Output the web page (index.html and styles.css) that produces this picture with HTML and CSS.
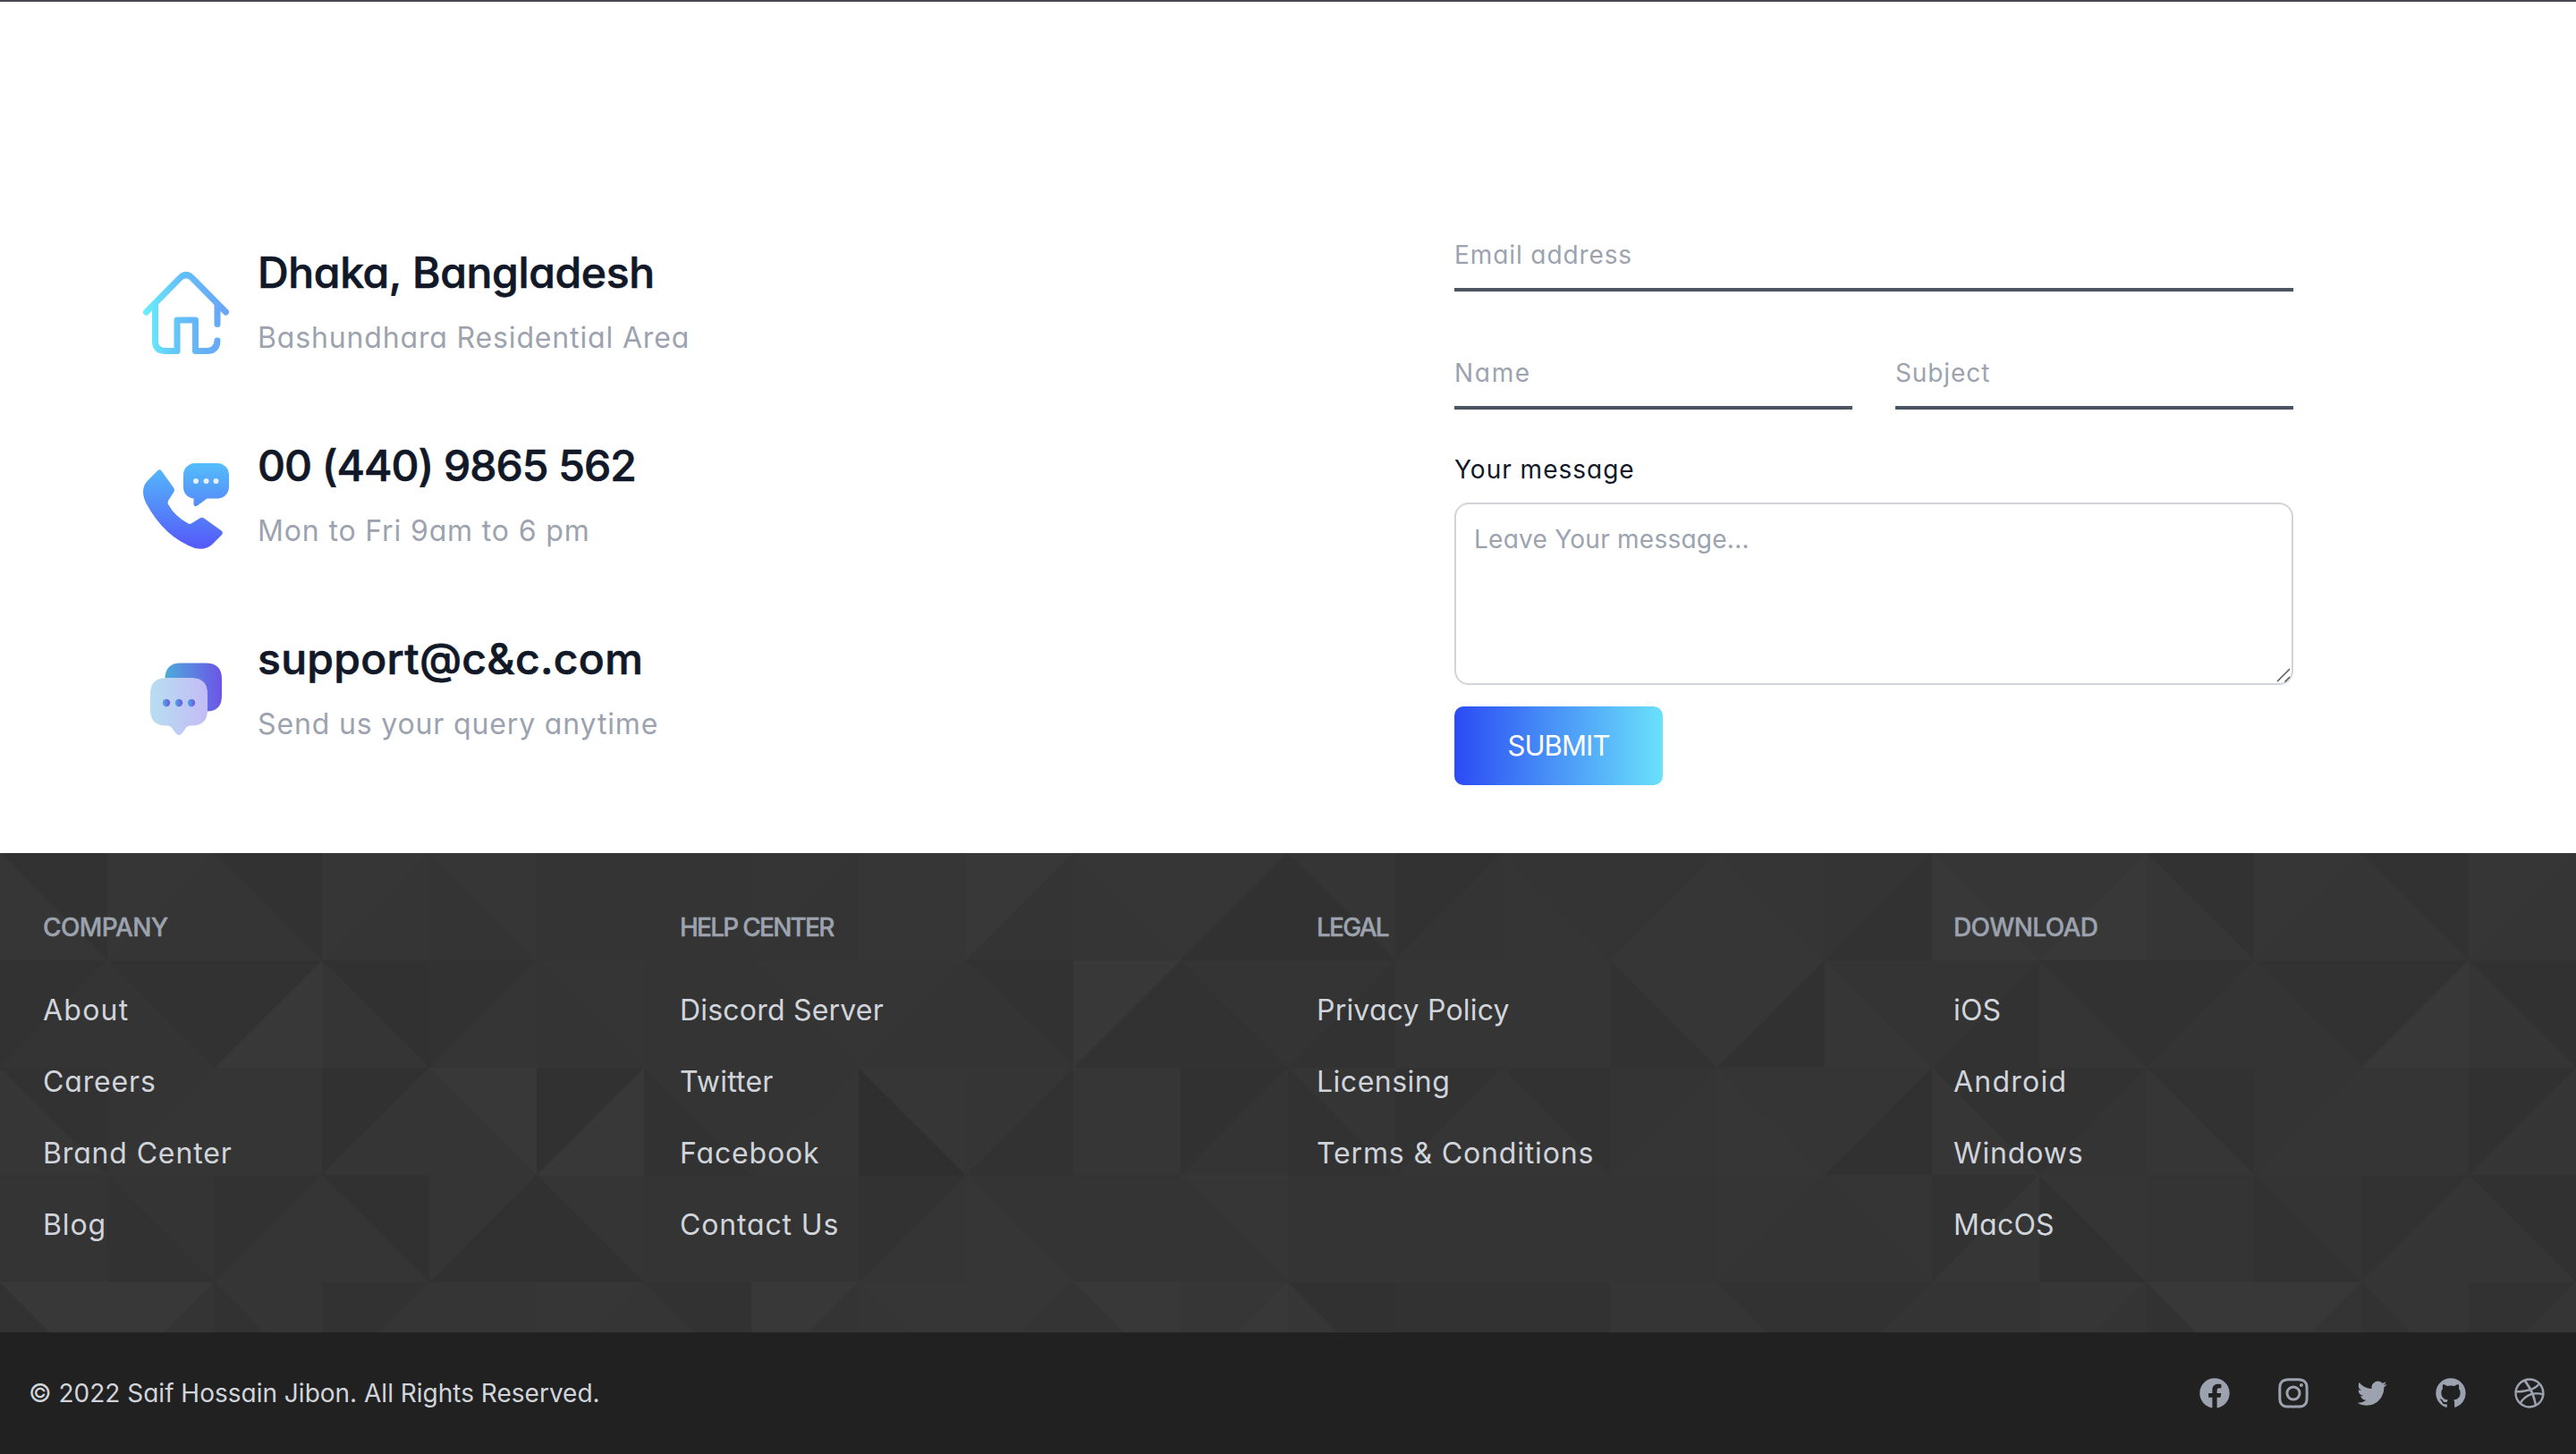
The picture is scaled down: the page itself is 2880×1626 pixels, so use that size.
FILE: index.html
```html
<!DOCTYPE html>
<html lang="en">
<head>
<meta charset="utf-8">
<title>Contact</title>
<link rel="stylesheet" href="styles.css">
</head>
<body>
<main class="contact">
  <section class="details">
    <div class="item">
      <svg class="item-icon" viewBox="0 0 96 96" fill="none" stroke="url(#gHouse)" stroke-width="7" stroke-linecap="round" stroke-linejoin="round">
        <defs><linearGradient id="gHouse" gradientUnits="userSpaceOnUse" x1="0" y1="48" x2="96" y2="48"><stop offset="0" stop-color="#6af0fc"/><stop offset=".45" stop-color="#63bff9"/><stop offset="1" stop-color="#69a3f9"/></linearGradient></defs>
        <path d="M3.5 47 41.500 8.500Q48 2.500 54.500 8.500L92.500 47"/>
        <path d="M13.500 38.500V79Q13.500 90.500 25 90.500H38V56H58.500V90.500H71Q82.500 90.500 83 79"/>
        <path d="M83 38.500V60.500"/>
      </svg>
      <div class="item-text"><h2>Dhaka, Bangladesh</h2><p>Bashundhara Residential Area</p></div>
    </div>
    <div class="item">
      <svg class="item-icon" viewBox="0 0 96 96">
        <defs><linearGradient id="gPhone" gradientUnits="userSpaceOnUse" x1="0" y1="0" x2="0" y2="96"><stop offset="0" stop-color="#54bdfb"/><stop offset="1" stop-color="#5558f9"/></linearGradient></defs>
        <g fill="url(#gPhone)">
        <path d="M58 0H83A13 13 0 0 1 96 13V26.500A13 13 0 0 1 83 39.500H71.500L60.500 47.500Q56.500 49.500 56.500 45V39.500A12.500 12.500 0 0 1 45 27V13A13 13 0 0 1 58 0Z"/>
        <path d="M16 8.500Q18.500 6 20.500 8.500L34.500 28Q35.500 30 34.500 32L28 42Q27 44 28 46Q36 60 50.500 67.500Q52.500 68.500 54.500 67L63.500 61.500Q66 60 68 61.500L87.500 75.500Q90 77.500 88 80L77 91Q70 97.500 58 95Q24 83 3.500 45Q-4 30 4.500 20Z"/>
        </g>
        <g fill="#e4f1fe"><circle cx="59" cy="20" r="3"/><circle cx="70.500" cy="20" r="3"/><circle cx="81.500" cy="20" r="3"/></g>
      </svg>
      <div class="item-text"><h2 class="figures">00 (440) 9865 562</h2><p>Mon to Fri 9am to 6 pm</p></div>
    </div>
    <div class="item">
      <svg class="item-icon" viewBox="0 0 96 96">
        <defs>
          <linearGradient id="gBack" x1="0" x2="1" y1="0" y2="0"><stop offset="0" stop-color="#4cabdb"/><stop offset="1" stop-color="#6c55e6"/></linearGradient>
          <linearGradient id="gFront" x1="0" x2="1" y1="0" y2="0"><stop offset="0" stop-color="#b8def1"/><stop offset="1" stop-color="#c3bbf5"/></linearGradient>
        </defs>
        <path fill="url(#gBack)" d="M24.500 30V25Q24.500 7.500 42 7.500H70Q88 7.500 88 25V44Q88 61.500 71 61.500L60 40Z"/>
        <path fill="url(#gFront)" d="M26 24H54Q72 24 72 42V60Q72 77.500 54 77.500H52Q49.500 77.500 48 80L43.500 86Q40 90 36.500 86L32 80Q30.500 77.500 28 77.500H26Q8 77.500 8 60V42Q8 24 26 24Z"/>
        <g fill="url(#gBack)"><circle cx="26" cy="52" r="4.200"/><circle cx="40" cy="52" r="4.200"/><circle cx="54" cy="52" r="4.200"/></g>
      </svg>
      <div class="item-text"><h2 class="mail">support@c&amp;c.com</h2><p>Send us your query anytime</p></div>
    </div>
  </section>
  <form class="form">
    <input class="field" type="text" placeholder="Email address">
    <div class="pair">
      <input class="field name" type="text" placeholder="Name">
      <input class="field" type="text" placeholder="Subject">
    </div>
    <label class="label" for="message">Your message</label>
    <div class="area">
      <textarea class="message" id="message" placeholder="Leave Your message..."></textarea>
      <svg class="grip" viewBox="0 0 16 16" stroke="#555" stroke-width="1.500"><path d="M1 15 15 1M9.500 15.500 15 10"/></svg>
    </div>
    <button class="submit" type="button">SUBMIT</button>
  </form>
</main>
<footer class="footer">
  <svg class="mosaic" id="mosaic" width="2880" height="536"></svg>
  <div class="columns">
    <div><h3>COMPANY</h3><ul><li class="wide">About</li><li>Careers</li><li>Brand Center</li><li>Blog</li></ul></div>
    <div><h3 class="tight">HELP CENTER</h3><ul><li class="snug">Discord Server</li><li class="snug">Twitter</li><li>Facebook</li><li>Contact Us</li></ul></div>
    <div><h3 class="tight">LEGAL</h3><ul><li class="snug">Privacy Policy</li><li class="medium">Licensing</li><li>Terms &amp; Conditions</li></ul></div>
    <div><h3>DOWNLOAD</h3><ul><li class="snug">iOS</li><li class="wide">Android</li><li>Windows</li><li class="snug">MacOS</li></ul></div>
  </div>
  <div class="bar">
    <span class="copy">© 2022 Saif Hossain Jibon. All Rights Reserved.</span>
    <div class="social">
      <svg viewBox="0 0 24 24"><path fill-rule="evenodd" d="M22 12c0-5.523-4.477-10-10-10S2 6.477 2 12c0 4.991 3.657 9.128 8.438 9.878v-6.987h-2.540V12h2.540V9.797c0-2.506 1.492-3.890 3.777-3.890 1.094 0 2.238.195 2.238.195v2.460h-1.260c-1.243 0-1.630.771-1.630 1.562V12h2.773l-.443 2.890h-2.330v6.988C18.343 21.128 22 16.991 22 12z" clip-rule="evenodd"/></svg>
      <svg viewBox="0 0 24 24"><path fill-rule="evenodd" d="M12.315 2c2.430 0 2.784.013 3.808.060 1.064.049 1.791.218 2.427.465a4.902 4.902 0 011.772 1.153 4.902 4.902 0 011.153 1.772c.247.636.416 1.363.465 2.427.048 1.067.060 1.407.060 4.123v.080c0 2.643-.012 2.987-.060 4.043-.049 1.064-.218 1.791-.465 2.427a4.902 4.902 0 01-1.153 1.772 4.902 4.902 0 01-1.772 1.153c-.636.247-1.363.416-2.427.465-1.067.048-1.407.060-4.123.060h-.080c-2.643 0-2.987-.012-4.043-.060-1.064-.049-1.791-.218-2.427-.465a4.902 4.902 0 01-1.772-1.153 4.902 4.902 0 01-1.153-1.772c-.247-.636-.416-1.363-.465-2.427-.047-1.024-.060-1.379-.060-3.808v-.630c0-2.430.013-2.784.060-3.808.049-1.064.218-1.791.465-2.427a4.902 4.902 0 011.153-1.772A4.902 4.902 0 015.450 2.525c.636-.247 1.363-.416 2.427-.465C8.901 2.013 9.256 2 11.685 2h.630zm-.081 1.802h-.468c-2.456 0-2.784.011-3.807.058-.975.045-1.504.207-1.857.344-.467.182-.800.398-1.150.748-.350.350-.566.683-.748 1.150-.137.353-.300.882-.344 1.857-.047 1.023-.058 1.351-.058 3.807v.468c0 2.456.011 2.784.058 3.807.045.975.207 1.504.344 1.857.182.466.399.800.748 1.150.350.350.683.566 1.150.748.353.137.882.300 1.857.344 1.054.048 1.370.058 4.041.058h.080c2.597 0 2.917-.010 3.960-.058.976-.045 1.505-.207 1.858-.344.466-.182.800-.398 1.150-.748.350-.350.566-.683.748-1.150.137-.353.300-.882.344-1.857.048-1.055.058-1.370.058-4.041v-.080c0-2.597-.010-2.917-.058-3.960-.045-.976-.207-1.505-.344-1.858a3.097 3.097 0 00-.748-1.150 3.098 3.098 0 00-1.150-.748c-.353-.137-.882-.300-1.857-.344-1.023-.047-1.351-.058-3.807-.058zM12 6.865a5.135 5.135 0 110 10.270 5.135 5.135 0 010-10.270zm0 1.802a3.333 3.333 0 100 6.666 3.333 3.333 0 000-6.666zm5.338-3.205a1.200 1.200 0 110 2.400 1.200 1.200 0 010-2.400z" clip-rule="evenodd"/></svg>
      <svg viewBox="0 0 24 24"><path d="M8.290 20.251c7.547 0 11.675-6.253 11.675-11.675 0-.178 0-.355-.012-.530A8.348 8.348 0 0022 5.920a8.190 8.190 0 01-2.357.646 4.118 4.118 0 001.804-2.270 8.224 8.224 0 01-2.605.996 4.107 4.107 0 00-6.993 3.743 11.650 11.650 0 01-8.457-4.287 4.106 4.106 0 001.270 5.477A4.072 4.072 0 012.800 9.713v.052a4.105 4.105 0 003.292 4.022 4.095 4.095 0 01-1.853.070 4.108 4.108 0 003.834 2.850A8.233 8.233 0 012 18.407a11.616 11.616 0 006.290 1.840"/></svg>
      <svg viewBox="0 0 24 24"><path fill-rule="evenodd" d="M12 2C6.477 2 2 6.484 2 12.017c0 4.425 2.865 8.180 6.839 9.504.500.092.682-.217.682-.483 0-.237-.008-.868-.013-1.703-2.782.605-3.369-1.343-3.369-1.343-.454-1.158-1.110-1.466-1.110-1.466-.908-.620.069-.608.069-.608 1.003.070 1.531 1.032 1.531 1.032.892 1.530 2.341 1.088 2.910.832.092-.647.350-1.088.636-1.338-2.220-.253-4.555-1.113-4.555-4.951 0-1.093.390-1.988 1.029-2.688-.103-.253-.446-1.272.098-2.650 0 0 .840-.270 2.750 1.026A9.564 9.564 0 0112 6.844c.850.004 1.705.115 2.504.337 1.909-1.296 2.747-1.027 2.747-1.027.546 1.379.202 2.398.100 2.651.640.700 1.028 1.595 1.028 2.688 0 3.848-2.339 4.695-4.566 4.943.359.309.678.920.678 1.855 0 1.338-.012 2.419-.012 2.747 0 .268.180.580.688.482A10.019 10.019 0 0022 12.017C22 6.484 17.522 2 12 2z" clip-rule="evenodd"/></svg>
      <svg viewBox="0 0 24 24"><path fill-rule="evenodd" d="M12 2C6.480 2 2 6.480 2 12s4.480 10 10 10c5.510 0 10-4.480 10-10S17.510 2 12 2zm6.605 4.610a8.502 8.502 0 011.930 5.314c-.281-.054-3.101-.629-5.943-.271-.065-.141-.120-.293-.184-.445a25.416 25.416 0 00-.564-1.236c3.145-1.280 4.577-3.124 4.761-3.362zM12 3.475c2.170 0 4.154.813 5.662 2.148-.152.216-1.443 1.941-4.480 3.080-1.399-2.570-2.950-4.675-3.189-5A8.687 8.687 0 0112 3.475zm-3.633.803a53.896 53.896 0 013.167 4.935c-3.992 1.063-7.517 1.040-7.896 1.040a8.581 8.581 0 014.729-5.975zM3.453 12.010v-.260c.370.010 4.512.065 8.775-1.215.250.477.477.965.694 1.453-.109.033-.228.065-.336.098-4.404 1.420-6.747 5.303-6.942 5.629a8.522 8.522 0 01-2.190-5.705zM12 20.547a8.482 8.482 0 01-5.239-1.800c.152-.315 1.888-3.656 6.703-5.337.022-.010.033-.010.054-.022a35.318 35.318 0 011.823 6.475 8.400 8.400 0 01-3.341.684zm4.761-1.465c-.086-.520-.542-3.015-1.659-6.084 2.679-.423 5.022.271 5.314.369a8.468 8.468 0 01-3.655 5.715z" clip-rule="evenodd"/></svg>
    </div>
  </div>
</footer>
<script src="mosaic.js"></script>
</body>
</html>
```
FILE: mosaic.js
```js
// Two shades per 120px cell: the triangle on its top edge, then the one on its bottom edge.
const rows = [
  '25 54 24 54 53 33 33 43 55 63 54 51 41 23 34 35 45 32 56 56',
  '23 23 26 14 24 43 33 43 43 23 62 32 32 44 44 52 51 35 32 24',
  '25 34 44 14 64 16 32 34 50 42 55 13 42 24 24 34 45 41 25 23',
  '33 32 24 14 41 41 33 33 24 35 33 53 33 33 33 33 43 43 25 41',
  '62 63 42 24 44 54 24 63 54 53 63 56 15 22 22 44 24 23 33 53'
];
const S = 120;
const paths = {};
rows.forEach((row, r) => {
  const cells = row.split(' ');
  for (let c = 0; c < 24; c++) {
    const [top, bottom] = cells[c % cells.length];
    const x = c * S, y = r * S;
    const falling = (c + r) % 2 === 0;
    const up = falling ? `M${x} ${y}h${S}v${S}z` : `M${x} ${y}h${S}l${-S} ${S}z`;
    const down = falling ? `M${x} ${y}l${S} ${S}h${-S}z` : `M${x + S} ${y}v${S}h${-S}z`;
    paths[top] = (paths[top] || '') + up;
    paths[bottom] = (paths[bottom] || '') + down;
  }
});
document.getElementById('mosaic').innerHTML = Object.entries(paths)
  .map(([k, d]) => `<path class="shade-${k}" d="${d}"/>`).join('');
```
FILE: styles.css
```css
* { box-sizing: border-box; }
body {
  margin: 0;
  background: #fff;
  color: #111827;
  font-family: Inter, "Open Sans", sans-serif;
  font-size: 32px;
  font-feature-settings: "cv11";
}
h2, h3, p, ul { margin: 0; padding: 0; font-weight: 400; }
ul { list-style: none; }

.contact {
  height: 954px;
  border-top: 2px solid #46484e;
  display: grid;
  grid-template-columns: 1466px 938px;
  padding-left: 160px;
}
.details { padding-top: 271px; display: flex; flex-direction: column; gap: 88px; }
.item { display: flex; gap: 32px; height: 128px; }
.item-icon { width: 96px; height: 96px; margin-top: 29px; flex: none; overflow: visible; }
.item-text h2 {
  font-size: 48px;
  line-height: 64px;
  font-weight: 500;
  -webkit-text-stroke: .7px #111827;
  letter-spacing: -.35px;
  margin-bottom: 17px;
  white-space: nowrap;
}
.item-text .figures { letter-spacing: -.98px; }
.item-text .mail { letter-spacing: .3px; }
.item-text p { font-size: 32px; line-height: 48px; letter-spacing: .85px; color: #9ca3af; }

.form { padding-top: 240px; display: flex; flex-direction: column; }
.field {
  font: inherit;
  font-size: 28px;
  letter-spacing: .9px;
  width: 100%;
  height: 84px;
  padding: 23px 0 17px;
  border: 0;
  border-bottom: 4px solid #4b5563;
  background: transparent;
}
.field.name { letter-spacing: 1.7px; }
.field::placeholder, .message::placeholder { color: #9ca3af; opacity: 1; }
.pair { display: grid; grid-template-columns: 1fr 1fr; gap: 48px; margin-top: 48px; }
.label { font-size: 28px; line-height: 40px; letter-spacing: 1px; margin-top: 47px; }
.area { position: relative; margin-top: 17px; height: 204px; }
.message {
  display: block;
  width: 100%;
  height: 100%;
  font: inherit;
  font-size: 28px;
  line-height: 40px;
  letter-spacing: .25px;
  padding: 19px 20px;
  border: 2px solid #d1d5db;
  border-radius: 16px;
  background: transparent;
  resize: none;
}
.grip { position: absolute; right: 3px; bottom: 3px; width: 16px; height: 16px; }
.submit {
  align-self: flex-start;
  width: 233px;
  height: 88px;
  margin-top: 24px;
  padding: 0 0 1px;
  border: 0;
  border-radius: 10px;
  background: linear-gradient(90deg, #2b4bf4, #6ae1fb);
  color: #fff;
  font: inherit;
  font-size: 31px;
  letter-spacing: -.9px;
}

.footer { position: relative; background: #333; }
.mosaic { position: absolute; left: 0; top: 0; display: block; }
.shade-0 { fill: #2f2f2f; }
.shade-1 { fill: #313131; }
.shade-2 { fill: #323232; }
.shade-3 { fill: #343434; }
.shade-4 { fill: #353535; }
.shade-5 { fill: #363636; }
.shade-6 { fill: #383838; }
.columns {
  position: relative;
  display: grid;
  grid-template-columns: repeat(4, 712px);
  height: 536px;
  padding: 63px 0 0 48px;
}
.columns h3 {
  font-size: 28px;
  line-height: 40px;
  font-weight: 500;
  -webkit-text-stroke: .4px #9ca3af;
  letter-spacing: -.6px;
  color: #9ca3af;
  margin-bottom: 49px;
}
.columns .tight { letter-spacing: -1.75px; }
.columns li { height: 48px; line-height: 48px; letter-spacing: .85px; margin-bottom: 32px; color: #d1d5db; }
.columns .wide { letter-spacing: 1.25px; }
.columns .medium { letter-spacing: .5px; }
.columns .snug { letter-spacing: .2px; }
.bar {
  position: relative;
  display: flex;
  align-items: center;
  justify-content: space-between;
  height: 136px;
  padding: 0 32px;
  background: #212121;
}
.copy { font-size: 28px; line-height: 40px; color: #d1d5db; }
.social { display: flex; gap: 48px; }
.social svg { width: 40px; height: 40px; fill: #9ca3af; }
```
